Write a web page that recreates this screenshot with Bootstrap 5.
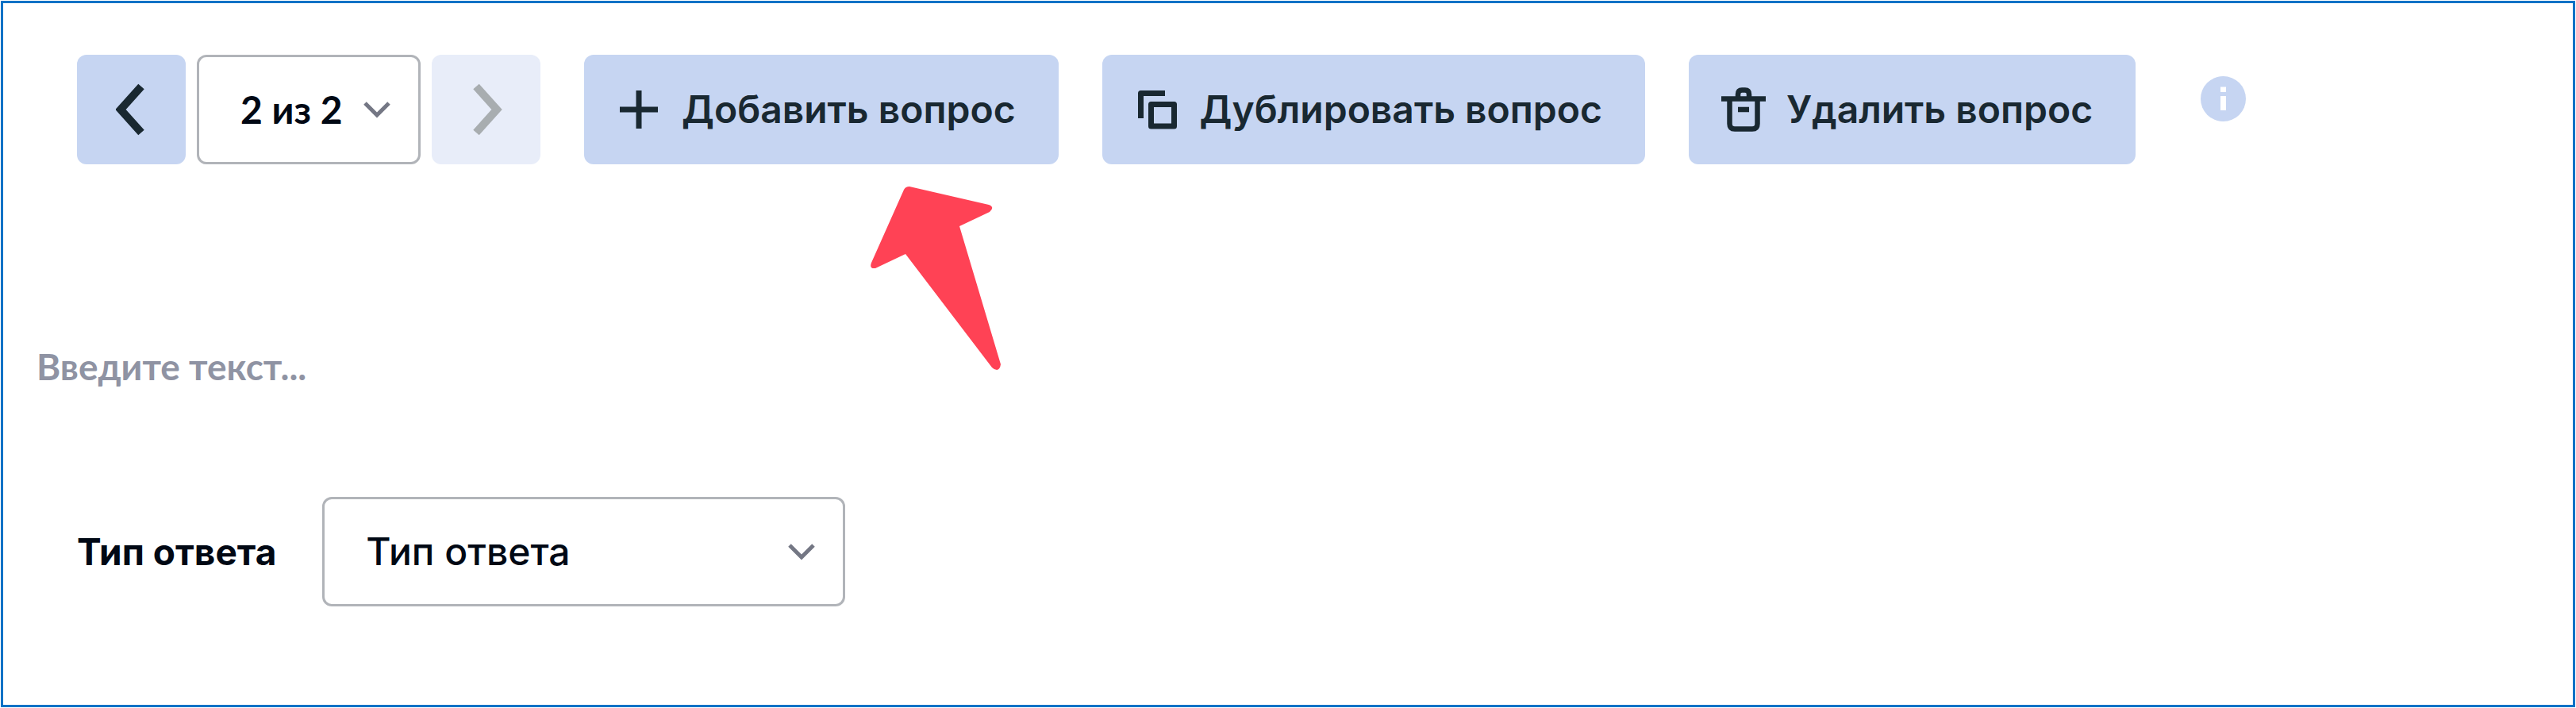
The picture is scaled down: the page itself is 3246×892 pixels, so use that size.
<!DOCTYPE html>
<html lang="ru">
<head>
<meta charset="utf-8">
<meta name="viewport" content="width=device-width, initial-scale=1">
<title>Редактор вопроса</title>
<link href="https://cdn.jsdelivr.net/npm/bootstrap@5.3.0/dist/css/bootstrap.min.css" rel="stylesheet">
<style>
  :root { --tint: #c6d5f2; --ink: #192831; --line: #b1b4b9; }
  body { font-family: Inter, "Open Sans", sans-serif; font-size: 48px; line-height: 56px; color: #000814; background: #fff; padding: 1px; }
  .editor { min-height: calc(100vh - 2px); border: 3px solid #0072c6; }
  .toolbar { padding: 65px 93px 0; gap: 55px; }
  .pager { gap: 14px; }
  .tool { --bs-btn-bg: var(--tint); --bs-btn-color: var(--ink); --bs-btn-border-width: 0; --bs-btn-border-radius: 12px;
    --bs-btn-hover-bg: #b5c8ee; --bs-btn-hover-color: var(--ink); --bs-btn-active-bg: #a9bfea;
    --bs-btn-disabled-bg: #e8edf9; --bs-btn-disabled-color: #a8adb0; --bs-btn-disabled-opacity: 1;
    --bs-btn-font-size: 48px; --bs-btn-font-weight: 600; --bs-btn-line-height: 56px;
    --bs-btn-padding-x: 0; --bs-btn-padding-y: 0; height: 138px; }
  .step { width: 137px; }
  .action { padding-left: 41px; padding-right: 54px; gap: 26px; }
  .picker { height: 138px; border: 3px solid var(--line); border-radius: 12px; font-size: 48px; line-height: 56px; color: #000814; background-color: #fff;
    background-size: 36px 24px; padding: 0 80px 0 52px;
    background-image: url("data:image/svg+xml,%3Csvg xmlns='http://www.w3.org/2000/svg' viewBox='0 0 36 24'%3E%3Cpath d='M3 4L18 19L33 4' fill='none' stroke='%23747784' stroke-width='5'/%3E%3C/svg%3E"); }
  .page-picker { width: 282px; font-family: Lato, sans-serif; font-weight: 700; background-position: right 34px center; }
  .type-picker { width: 659px; font-weight: 500; background-position: right 34px center; }
  .info { margin: 27px 0 0 27px; line-height: 0; }
  .question { margin-top: 222px; padding: 0 42px; font-family: Lato, sans-serif; font-weight: 700; font-size: 46px; line-height: 64px; color: #8f93a3; }
  .question::placeholder { color: #8f93a3; opacity: 1; }
  .answer { padding: 131px 93px 0; gap: 58px; }
  .answer-label { font-size: 46px; }
  .pointer { left: 1093px; top: 231px; }
</style>
</head>
<body>
<main class="editor position-relative">
  <div class="toolbar d-flex flex-wrap align-items-start">
    <nav class="pager d-flex" aria-label="Вопросы">
      <button type="button" class="btn tool step d-flex align-items-center justify-content-center" aria-label="Назад">
        <svg width="40" height="66" viewBox="0 0 40 66" fill="none" stroke="currentColor" stroke-width="10" aria-hidden="true"><path d="M32 4L6 33L32 62"/></svg>
      </button>
      <select class="form-select picker page-picker" aria-label="Номер вопроса"><option>2 из 2</option></select>
      <button type="button" class="btn tool step d-flex align-items-center justify-content-center" aria-label="Вперёд" disabled>
        <svg width="40" height="66" viewBox="0 0 40 66" fill="none" stroke="currentColor" stroke-width="10" aria-hidden="true"><path d="M7 4L33 33L7 62"/></svg>
      </button>
    </nav>
    <button type="button" class="btn tool action d-flex align-items-center">
      <svg width="56" height="56" viewBox="0 0 56 56" fill="none" stroke="currentColor" stroke-width="7" aria-hidden="true"><path d="M28 4V52M4 28H52"/></svg>
      <span>Добавить вопрос</span>
    </button>
    <button type="button" class="btn tool action d-flex align-items-center">
      <svg width="56" height="56" viewBox="0 0 56 56" fill="none" stroke="currentColor" stroke-width="7" stroke-linejoin="round" aria-hidden="true"><path d="M38 7.500H7.500V39M20.500 21.500H49.500V49H20.500Z"/></svg>
      <span>Дублировать вопрос</span>
    </button>
    <button type="button" class="btn tool action d-flex align-items-center">
      <svg width="56" height="56" viewBox="0 0 56 56" fill="none" stroke="currentColor" stroke-width="6.500" aria-hidden="true"><path d="M0 14.500H56M21 14V9Q21 3.500 26 3.500H30Q35 3.500 35 9V14M10.500 15V46Q10.500 52.500 17 52.500H39Q45.500 52.500 45.500 46V15M21 28H35"/></svg>
      <span>Удалить вопрос</span>
    </button>
    <a href="#" class="info" aria-label="Справка">
      <svg width="57" height="57" viewBox="0 0 57 57" aria-hidden="true"><circle cx="28.500" cy="28.500" r="28.500" fill="#c6d5f2"/><path d="M28.500 13.500V20M28.500 25V43" stroke="#fff" stroke-width="7"/></svg>
    </a>
  </div>

  <input type="text" class="question form-control-plaintext" placeholder="Введите текст..." aria-label="Текст вопроса">

  <div class="answer d-flex align-items-center">
    <label for="answer-type" class="answer-label fw-bold">Тип ответа</label>
    <select id="answer-type" class="form-select picker type-picker"><option>Тип ответа</option></select>
  </div>

  <svg class="pointer position-absolute" width="164" height="231" viewBox="0 0 164 231" fill="#ff4255" aria-hidden="true"><path d="M42 4Q44 0 49 0L149 23Q157 26 150 32L112 50L164 224Q163 231 159 231Q156 231 153 228L44 85L6 103Q-2 104 1 96Z"/></svg>
</main>
<script src="https://cdn.jsdelivr.net/npm/bootstrap@5.3.0/dist/js/bootstrap.bundle.min.js"></script>
</body>
</html>
